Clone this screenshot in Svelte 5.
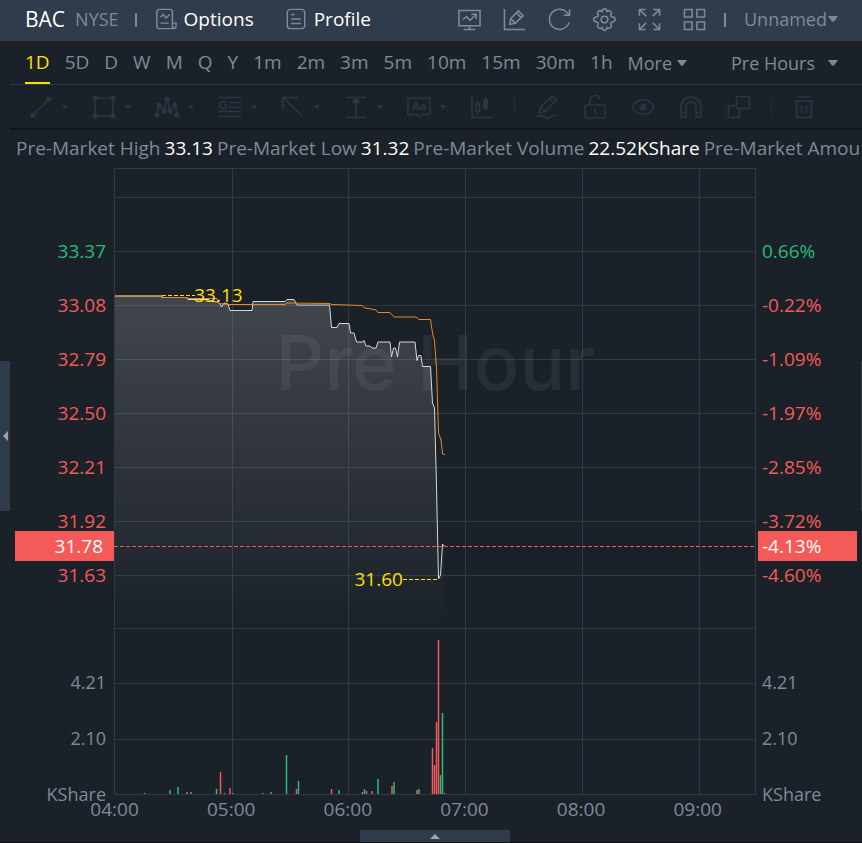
<script lang="ts">
	type Bar = [x: number, height: number, side: 'up' | 'down'];

	const periods = ['1D', '5D', 'D', 'W', 'M', 'Q', 'Y', '1m', '2m', '3m', '5m', '10m', '15m', '30m', '1h'];
	let period = $state('1D');

	const stats = [
		['Pre-Market High', '33.13'],
		['Pre-Market Low', '31.32'],
		['Pre-Market Volume', '22.52KShare'],
		['Pre-Market Amount', '']
	];

	const prices = ['33.37', '33.08', '32.79', '32.50', '32.21', '31.92', '31.63'];
	const changes = ['0.66%', '-0.22%', '-1.09%', '-1.97%', '-2.85%', '-3.72%', '-4.60%'];
	const volumes = ['4.21', '2.10', 'KShare'];
	const times = ['04:00', '05:00', '06:00', '07:00', '08:00', '09:00'];

	const columns = [232.5, 348.5, 465.5, 582.5, 699.5];
	const rows = [197.5, 251.5, 305.5, 359.5, 413.5, 467.5, 521.5, 575.5, 628.5, 683.5, 739.5];

	const priceLine =
		'115,296 162,296 162,297.5 187,297.5 188,299.5 209,299.5 210,301 218,302 220,304 221.5,307 224,303 228,304 230,310.5 252,310.5 253,301.5 285,301.5 287,299.5 294,299.5 297,305 329.5,305 331.5,327.5 337,327.5 339,323.5 349,323.5 350.5,333 354,333 356.5,342 363,342 364,340.5 366,346 370,346 372,348 376,348 378,342 390,342 391.5,357 393.5,348 395.5,348 397.5,357 399.5,342 415,342 417,360.5 418.5,355.5 421,355.5 422.5,366.5 430.5,366.5 432.5,403 434.5,408 436.5,487 438.5,579 440.5,575 442.5,544 444,546';
	const averageLine =
		'115,296 162,296 163,297.5 187,297.5 188,298.5 217,298.5 219,303.5 229,304.5 285,304.5 287,303 329,303.5 332,304.5 362,305.5 365,308 371,309 376,310 378,312.5 390,312.5 394,317 416,317 419,319.5 430.5,319.5 432.5,333 434.5,341 436.5,368 438.5,433 441,440 442.5,454 445,454.5';

	const bars: Bar[] = [
		[144.5, 1, 'up'], [170, 4, 'up'], [178, 7, 'up'], [187, 2, 'down'], [191, 2, 'up'],
		[216.5, 5, 'up'], [220.5, 22, 'down'], [224.5, 1, 'up'], [230, 6, 'down'], [233, 1, 'up'],
		[263, 1, 'up'], [271, 2, 'up'], [286.5, 39, 'up'], [296.5, 5, 'down'], [298.5, 13, 'up'],
		[331.5, 5, 'down'], [339, 4, 'up'], [362.5, 2, 'up'], [364.5, 5, 'up'], [366.5, 3, 'down'],
		[372, 3, 'down'], [378, 15, 'up'], [392, 8, 'down'], [394, 12, 'up'], [417, 4, 'down'],
		[419, 5, 'up'], [432.5, 46, 'down'], [434.5, 29, 'down'], [436.5, 72, 'down'],
		[438.5, 154, 'down'], [440.5, 19, 'up'], [442.5, 81, 'up'], [444.5, 1, 'down']
	];

	// 24x24 stroke icons
	const actions = [
		{ name: 'Indicators', d: 'M1 2.5h22v16H1zM12 18.5v4M6 22.5h12M5 12l4-3 3.5 4 6-6M14 6.5h5v5' },
		{ name: 'Draw', d: 'M1.5 1v21.5H23M7 17l1-6 8-8 5 5-8 8zM8 11l5 5M14 5l5 5' },
		{ name: 'Refresh', d: 'M22 15A10.5 10.5 0 1 1 20 5l2.5 2.5M22.5 1.5v6h-6' },
		{
			name: 'Settings',
			d: 'M9.5 3.5C10 0 14 0 14.5 3.5 17.500 1.500 20.5 4 18.6 7 18 8 19 9.3 20.5 9.5 24 10 24 14 20.5 14.5 19 14.7 18 16 18.6 17 20.5 20 17.5 22.5 14.5 20.5 14 24 10 24 9.5 20.5 6.5 22.5 3.5 20 5.4 17 6 16 5 14.7 3.5 14.5 0 14 0 10 3.5 9.5 5 9.3 6 8 5.4 7 3.5 4 6.5 1.5 9.5 3.5zM12 8.500a3.5 3.5 0 1 0 0 7 3.5 3.5 0 0 0 0-7z'
		},
		{ name: 'Full screen', d: 'M1.5 8V1.5H8M1.5 1.5l7 7M16 1.5h6.5V8M22.5 1.5l-7 7M1.5 16v6.5H8M1.5 22.5l7-7M22.5 16v6.5H16M22.5 22.5l-7-7' },
		{ name: 'Layout', d: 'M1.5 1.5h8v8h-8zM14.5 1.5h8v8h-8zM1.5 14.5h8v8h-8zM14.5 14.5h8v8h-8z' }
	];

	const tools = [
		{ name: 'Trend line', d: 'M4.5 19.5l15-15', dots: [[4, 20], [20, 4]] },
		{ name: 'Rectangle', d: 'M3 3h18v18H3z', dots: [[3, 3], [21, 3], [3, 21], [21, 21]] },
		{ name: 'Pattern', d: 'M2 20L4 9l5 7 3-13 3 13 5-7 2 11', dots: [[2, 20], [4, 10], [9, 16], [12, 4], [15, 16], [20, 10], [22, 20]] },
		{ name: 'Golden section', d: 'M1 2.5h22M11 7.5h12M11 12.5h12M1 16.5h22M1 21.5h22M8 7.5C6 5.5 2 6 2 10s4 4 6 3v-3H6', dots: [] },
		{ name: 'Arrow', d: 'M2 15V2.5h15M2 2.5L21 21', dots: [] },
		{ name: 'Measure', d: 'M2 2.5h20M2 22.5h20M12 22V5M8.5 7.5L12 3.5l3.5 4', dots: [[12, 6]] }
	];

	const editing = [
		{ name: 'Pencil', d: 'M4 18l1.5-6L17 1l4.5 4-11 11.5zM5.5 12l5 4M14.5 3.5l4.5 4M1 22c3-2 5-2 8 0s5 2 8-1l5-1' },
		{ name: 'Lock', d: 'M4 10h16a2 2 0 0 1 2 2v9a2 2 0 0 1-2 2H4a2 2 0 0 1-2-2v-9a2 2 0 0 1 2-2zM7 10V6a5 5 0 0 1 10-1M12 14v5' },
		{ name: 'Visibility', d: 'M1 12C6 2.5 18 2.5 23 12 18 21.5 6 21.5 1 12z', dots: [[12, 12], [11, 13], [13, 13], [13, 11]] },
		{ name: 'Magnet', d: 'M2 22V12a10 10 0 0 1 20 0v10h-5V12a5 5 0 0 0-10 0v10zM2 17.5h5M17 17.5h5' },
		{ name: 'Arrange', d: 'M11 1.5h10A1.5 1.5 0 0 1 22.5 3v9a1.5 1.5 0 0 1-1.5 1.5H11A1.5 1.5 0 0 1 9.5 12V3A1.5 1.5 0 0 1 11 1.5zM9.5 10.5H3A1.5 1.5 0 0 0 1.5 12v9A1.5 1.5 0 0 0 3 22.5h8a1.5 1.5 0 0 0 1.5-1.5v-7.5' }
	];
</script>

{#snippet icon(d: string, dots: number[][] = [])}
	<svg class="icon" viewBox="0 0 24 24" aria-hidden="true">
		<path {d} />
		{#each dots as [cx, cy]}
			<circle class="dot" {cx} {cy} r="1.8" />
		{/each}
	</svg>
{/snippet}

{#snippet caret()}
	<svg class="caret" viewBox="0 0 10 6" aria-hidden="true"><path d="M0 0h10L6 5.5H4z" /></svg>
{/snippet}

<div class="app">
	<header class="topbar">
		<h1 class="symbol">BAC</h1>
		<span class="exchange">NYSE</span>
		<span class="divider"></span>
		<button class="page-link" type="button">
			{@render icon('M18 22.5H5A3 3 0 0 1 2 19.5v-15A3 3 0 0 1 5 1.5h11A3 3 0 0 1 19 4.5V20a2 2 0 0 0 4 0v-3.5h-4M23 20c0 1.5-1 2.5-3 2.5h-3M6 10l3-3 3 4 4-4M6 16.5h9')}
			Options
		</button>
		<button class="page-link profile" type="button">
			{@render icon('M6 1.5h12A3.5 3.5 0 0 1 21.5 5v14a3.5 3.5 0 0 1-3.5 3.5H6A3.5 3.5 0 0 1 2.5 19V5A3.5 3.5 0 0 1 6 1.5zM6.5 7h4M6.5 12h11M6.5 17h11')}
			Profile
		</button>
		<div class="actions">
			{#each actions as action}
				<button type="button" aria-label={action.name}>{@render icon(action.d)}</button>
			{/each}
		</div>
		<span class="divider last"></span>
		<label class="picker workspace">
			<select aria-label="Workspace"><option>Unnamed</option></select>
			{@render caret()}
		</label>
	</header>

	<nav class="periods">
		{#each periods as item}
			<button type="button" class:active={period === item} onclick={() => (period = item)}>{item}</button>
		{/each}
		<label class="picker more">
			<select aria-label="More periods"><option>More</option></select>
			{@render caret()}
		</label>
		<label class="picker session">
			<select aria-label="Session"><option>Pre Hours</option></select>
			{@render caret()}
		</label>
	</nav>

	<div class="tools">
		{#each tools as tool}
			<button type="button" class="with-menu" aria-label={tool.name}>
				{@render icon(tool.d, tool.dots)}
				{@render caret()}
			</button>
		{/each}
		<button type="button" class="with-menu" aria-label="Text">
			<svg class="icon" viewBox="0 0 24 24" aria-hidden="true">
				<path d="M1 3h22v16.5h-8L12 22l-3-2.5H1z" />
				<text x="12" y="15">Aa</text>
			</svg>
			{@render caret()}
		</button>
		<button type="button" aria-label="Candles">
			{@render icon('M2 1v21.5h21M6 9h3.5v7.5H6zM7.8 6v3M7.8 16.5v2M14 5h3.5v8H14zM15.8 2v13M15 5v8M16.5 5v8')}
		</button>
		<span class="tool-divider"></span>
		<div class="editing">
			{#each editing as tool}
				<button type="button" aria-label={tool.name}>{@render icon(tool.d, tool.dots)}</button>
			{/each}
		</div>
		<span class="tool-divider"></span>
		<button type="button" aria-label="Delete">
			{@render icon('M6 2h12M2 6h20M4.5 6v14A2.5 2.5 0 0 0 7 22.5h10a2.5 2.5 0 0 0 2.5-2.5V6M9.5 10v8M14.5 10v8')}
		</button>
	</div>

	<main>
		<div class="stats">
			{#each stats as [label, value]}
				<span>{label}</span>
				{#if value}<strong>{value}</strong>{/if}
			{/each}
		</div>

		<section class="chart">
			<div class="axis left">
				{#each prices as price, i}
					<span class={i === 0 ? 'up' : 'down'}>{price}</span>
				{/each}
				<div class="volume-labels">
					{#each volumes as volume}<span>{volume}</span>{/each}
				</div>
				<span class="tag">31.78</span>
			</div>

			<div class="plot">
				<svg class="canvas" viewBox="114 168 642 627" preserveAspectRatio="none" aria-label="BAC price chart">
					<defs>
						<linearGradient id="fade" gradientUnits="userSpaceOnUse" x1="0" y1="296" x2="0" y2="628">
							<stop offset="0" stop-color="#fff" stop-opacity="0.17" />
							<stop offset="1" stop-color="#fff" stop-opacity="0" />
						</linearGradient>
					</defs>
					{#each columns as x}
						<line class="grid" x1={x} x2={x} y1="168" y2="795" />
					{/each}
					{#each rows as y}
						<line class="grid" x1="114" x2="756" y1={y} y2={y} />
					{/each}
					<rect class="frame" x="114.5" y="168.5" width="641" height="626" />
					<polygon points="115,628 {priceLine} 444,628" fill="url(#fade)" />
					<polyline class="price" points={priceLine} />
					<polyline class="average" points={averageLine} />
					<line class="marker" x1="162" x2="195" y1="295.5" y2="295.5" />
					<line class="marker" x1="403" x2="438" y1="579.5" y2="579.5" />
					<line class="current" x1="114" x2="756" y1="546.5" y2="546.5" />
					{#each bars as [x, height, side]}
						<rect class={side} x={x - 0.75} y={794 - height} width="1.5" {height} />
					{/each}
				</svg>
				<div class="watermark">Pre Hour</div>
				<span class="callout high">33.13</span>
				<span class="callout bottom">31.60</span>
			</div>

			<div class="axis right">
				{#each changes as change, i}
					<span class={i === 0 ? 'up' : 'down'}>{change}</span>
				{/each}
				<div class="volume-labels">
					{#each volumes as volume}<span>{volume}</span>{/each}
				</div>
				<span class="tag">-4.13%</span>
			</div>

			<div class="times">
				{#each times as time}<span>{time}</span>{/each}
			</div>
		</section>
	</main>

	<button class="handle side" type="button" aria-label="Open left panel"></button>
	<button class="handle edge" type="button" aria-label="Open right panel"></button>
	<button class="handle foot" type="button" aria-label="Open bottom panel"></button>
</div>

<style>
	:global(body) {
		margin: 0;
		background: #1b2129;
	}

	.app {
		--muted: #808999;
		--line: #2f3a46;
		--bar: #303b4b;
		--up: #27bd77;
		--down: #f45a57;
		position: relative;
		box-sizing: border-box;
		min-height: 100vh;
		overflow: hidden;
		border-bottom: 1px solid #0d1116;
		background: #1b2129;
		color: var(--muted);
		font: 19px/24px 'Open Sans', 'Noto Sans', sans-serif;
	}

	button,
	select {
		margin: 0;
		padding: 0;
		border: 0;
		background: none;
		color: inherit;
		font: inherit;
		cursor: pointer;
	}

	.icon {
		display: block;
		width: 24px;
		height: 24px;
		flex-shrink: 0;
		fill: none;
		stroke: currentColor;
		stroke-width: 1.6;
		overflow: visible;
	}
	.dot {
		fill: currentColor;
	}
	.caret {
		width: 10px;
		height: 6px;
		flex-shrink: 0;
		fill: currentColor;
	}

	/* Top bar */
	.topbar {
		display: flex;
		align-items: center;
		height: 41px;
		padding: 0 24px 3px 25px;
		box-sizing: border-box;
		background: var(--bar);
	}
	.symbol {
		margin: 0 10px 0 0;
		color: #fff;
		font-size: 21px;
		font-weight: 400;
	}
	.exchange {
		font-size: 18px;
	}
	.divider {
		width: 2px;
		height: 14px;
		margin: 2px 18px 0 16px;
		background: var(--muted);
	}
	.divider.last {
		margin-left: 18px;
	}
	.page-link {
		display: flex;
		align-items: center;
		gap: 7px;
		color: #fff;
	}
	.page-link .icon {
		width: 22px;
		height: 22px;
		color: var(--muted);
	}
	.page-link.profile {
		margin-left: 31px;
	}
	.actions {
		display: flex;
		gap: 22px;
		margin-left: auto;
	}
	.actions .icon {
		width: 23px;
		height: 23px;
	}

	.picker {
		display: flex;
		align-items: center;
		font-size: 18px;
	}
	.picker select {
		appearance: none;
		outline: none;
	}
	.workspace select {
		width: 84px;
	}

	/* Periods */
	.periods {
		display: flex;
		align-items: stretch;
		gap: 15px;
		height: 43px;
		margin-left: 10px;
		padding: 0 24px 0 15px;
		border-bottom: 1px solid #2b3847;
	}
	.periods button {
		border-bottom: 2px solid transparent;
	}
	.periods .active {
		border-color: #ffdf00;
		color: #ffdf00;
	}
	.more select {
		width: 45px;
		margin-right: 4px;
	}
	.session {
		margin-left: auto;
	}
	.session select {
		width: 84px;
		margin-right: 13px;
	}

	/* Drawing tools */
	.tools {
		display: flex;
		align-items: center;
		height: 43px;
		margin-left: 10px;
		padding: 0 46px 0 19px;
		border-bottom: 2px solid #11151a;
		color: #2d3541;
	}
	.tools text {
		fill: currentColor;
		stroke: none;
		font-size: 11px;
		font-weight: 700;
		text-anchor: middle;
	}
	.with-menu {
		display: flex;
		align-items: center;
		gap: 9px;
		margin-right: 24px;
	}
	.with-menu .caret {
		width: 6px;
		height: 4px;
	}
	.tool-divider {
		width: 1px;
		height: 18px;
		margin: 0 20px;
		background: #252d37;
	}
	.editing {
		display: flex;
		flex: 1;
		justify-content: space-between;
	}

	/* Market stats */
	.stats {
		display: flex;
		gap: 4px;
		margin: 0 3px 0 16px;
		padding: 6px 0 8px;
		overflow: hidden;
		white-space: nowrap;
	}
	.stats strong {
		color: #fff;
		font-weight: 400;
	}

	/* Chart */
	.chart {
		display: grid;
		grid-template-columns: 114px minmax(0, 1fr) 106px;
		grid-template-rows: 627px 28px;
	}
	.axis {
		position: relative;
		display: flex;
		flex-direction: column;
		padding-top: 56px;
	}
	.axis span {
		line-height: 54px;
	}
	.left {
		padding-right: 8px;
		text-align: right;
	}
	.right {
		padding-left: 6px;
	}
	.volume-labels {
		display: flex;
		flex-direction: column;
		margin-top: 52px;
		font-size: 18px;
	}
	.axis .volume-labels span {
		line-height: 56px;
	}
	.axis .up {
		color: var(--up);
	}
	.axis .down {
		color: var(--down);
	}
	.axis .tag {
		position: absolute;
		top: 363px;
		right: 0;
		width: 99px;
		box-sizing: border-box;
		padding: 0 11px 0 4px;
		background: var(--down);
		color: #fff;
		line-height: 30px;
	}
	.right .tag {
		right: auto;
		left: 2px;
	}

	.plot {
		position: relative;
	}
	.canvas {
		display: block;
		width: 100%;
		height: 627px;
	}
	.canvas line,
	.canvas polyline,
	.frame {
		fill: none;
		vector-effect: non-scaling-stroke;
	}
	.grid,
	.frame {
		stroke: var(--line);
	}
	.price {
		stroke: #d5d7da;
	}
	.average {
		stroke: #e88a25;
	}
	.marker {
		stroke: #ffdf00;
		stroke-dasharray: 4 2;
	}
	.current {
		stroke: var(--down);
		stroke-dasharray: 4 2;
	}
	.canvas .up {
		fill: var(--up);
	}
	.canvas .down {
		fill: var(--down);
	}
	.watermark {
		position: absolute;
		top: 149px;
		left: 0;
		right: 0;
		color: rgba(255, 255, 255, 0.06);
		font: 500 76px/90px Inter, sans-serif;
		text-align: center;
		white-space: nowrap;
		pointer-events: none;
	}
	.callout {
		position: absolute;
		color: #ffdf00;
	}
	.callout.high {
		top: 115px;
		left: 12.5%;
	}
	.callout.bottom {
		top: 399px;
		right: 55%;
	}

	/* One column per hour, centred on the grid lines */
	.times {
		grid-column: 2;
		display: grid;
		grid-template-columns: repeat(6, 1fr);
		margin-left: -9%;
		padding-top: 2px;
		text-align: center;
	}

	/* Panel handles */
	.handle {
		position: absolute;
		display: grid;
		place-items: center;
		background: var(--bar);
	}
	.handle::before {
		content: '';
		border: 5px solid transparent;
	}
	.side {
		top: 361px;
		left: 0;
		width: 10px;
		height: 150px;
	}
	.side::before {
		border-left-width: 0;
		border-right-color: #9aa3b2;
	}
	.edge {
		top: 361px;
		right: 0;
		width: 1px;
		height: 150px;
		overflow: hidden;
	}
	.edge::before {
		display: none;
	}
	.foot {
		bottom: 0;
		left: calc(50% + 4px);
		width: 150px;
		height: 12px;
		transform: translateX(-50%);
	}
	.foot::before {
		border-top-width: 0;
		border-bottom-color: #9aa3b2;
	}
</style>
